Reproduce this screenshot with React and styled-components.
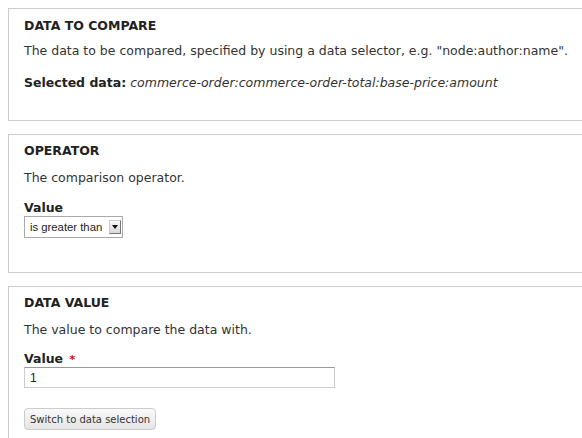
import React from "react"
import styled, { createGlobalStyle } from "styled-components"

const GlobalStyle = createGlobalStyle`
  html, body {
    margin: 0;
    padding: 0;
    background: #fff;
    overflow: hidden;
  }
  body {
    padding: 8px 0 0 8px;
    font-family: "DejaVu Sans", Verdana, sans-serif;
    font-size: 12.5px;
    color: #333;
  }
`

const Page = styled.div`
  width: 620px;
  display: flex;
  flex-direction: column;
  gap: 13px;
`

const Panel = styled.fieldset`
  margin: 0;
  border: 1px solid #ccc;
  padding: ${props => props.pad || "8px 15px 26px"};
  min-width: 0;
  display: flex;
  flex-direction: column;
  align-items: flex-start;
`

const Title = styled.h3`
  margin: 0;
  font-size: 12.5px;
  line-height: 16px;
  font-weight: bold;
  color: #222;
  text-transform: uppercase;
`

const Description = styled.p`
  margin: ${props => props.gap || "8px"} 0 0;
  line-height: 18px;
`

const Selected = styled.p`
  margin: 14px 0 0;
  line-height: 18px;
  b {
    font-weight: bold;
    color: #222;
  }
  i {
    font-style: italic;
  }
`

const Label = styled.label`
  margin-top: ${props => props.gap || "13px"};
  font-weight: bold;
  line-height: 16px;
  color: #222;
`

const Required = styled.span`
  color: #e00;
  font-size: 11px;
  line-height: 10px;
  margin-left: 2px;
`

const SelectBox = styled.div`
  margin-top: 0;
  width: 99px;
  height: 22px;
  box-sizing: border-box;
  border: 1px solid #aaa;
  display: flex;
  align-items: center;
  justify-content: space-between;
  padding: 0 1px 0 5px;
  font-family: "Liberation Sans", Arial, sans-serif;
  font-size: 11.3px;
  color: #222;
  background: #fff;
`

const Arrow = styled.span`
  width: 12px;
  height: 14px;
  box-sizing: border-box;
  border: 1px solid #777;
  border-top-color: #ccc;
  border-left-color: #ccc;
  background: linear-gradient(#fafafa, #d8d8d8);
  display: flex;
  align-items: center;
  justify-content: center;
  &::after {
    content: "";
    border-left: 3px solid transparent;
    border-right: 3px solid transparent;
    border-top: 4px solid #111;
  }
`

const TextInput = styled.input`
  margin-top: 0;
  width: 311px;
  height: 21px;
  box-sizing: border-box;
  border: 1px solid #ccc;
  border-top-color: #999;
  padding: 0 5px;
  font-family: "Liberation Sans", Arial, sans-serif;
  font-size: 12px;
  color: #222;
`

const Button = styled.button`
  margin-top: 20px;
  height: 22px;
  padding: 0 5px;
  border: 1px solid #ccc;
  border-radius: 4px;
  background: linear-gradient(#fafafa, #e4e4e4);
  font-family: "DejaVu Sans", Verdana, sans-serif;
  font-size: 10px;
  color: #333;
`

export default function App() {
  return (
    <>
      <GlobalStyle />
      <Page>
        <Panel pad="9px 15px 28px">
          <Title>Data to compare</Title>
          <Description>
            The data to be compared, specified by using a data selector, e.g. "node:author:name".
          </Description>
          <Selected>
            <b>Selected data:</b> <i>commerce-order:commerce-order-total:base-price:amount</i>
          </Selected>
        </Panel>
        <Panel pad="8px 15px 34px">
          <Title>Operator</Title>
          <Description gap="10px">The comparison operator.</Description>
          <Label>Value</Label>
          <SelectBox>
            is greater than
            <Arrow />
          </SelectBox>
        </Panel>
        <Panel pad="8px 15px 20px">
          <Title>Data value</Title>
          <Description gap="10px">The value to compare the data with.</Description>
          <Label gap="12px">
            Value <Required>*</Required>
          </Label>
          <TextInput defaultValue="1" />
          <Button>Switch to data selection</Button>
        </Panel>
      </Page>
    </>
  )
}
